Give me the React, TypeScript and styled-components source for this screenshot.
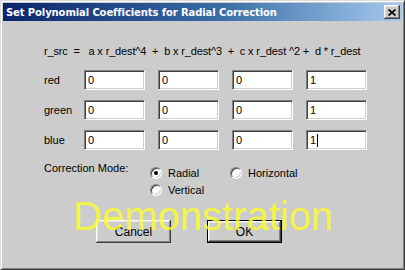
import React from "react";
import styled, { createGlobalStyle } from "styled-components";

const Global = createGlobalStyle`
  html, body {
    margin: 0;
    padding: 0;
    background: #cccccc;
  }
  * {
    box-sizing: border-box;
  }
`;

const face = "#cccccc";

const Window = styled.div`
  position: relative;
  width: 405px;
  height: 270px;
  background: ${face};
  border: 1px solid;
  border-color: #dcdcdc #404040 #404040 #dcdcdc;
  box-shadow: inset 1px 1px #ffffff, inset -1px -1px #808080;
  padding: 2px;
  font-family: "Liberation Sans", Arial, sans-serif;
  font-size: 11px;
  color: #000;
`;

const TitleBar = styled.div`
  height: 18px;
  display: flex;
  align-items: center;
  justify-content: space-between;
  padding: 0 2px 0 3px;
  background: linear-gradient(to right, #0a246a 0%, #3a6ea5 55%, #a6caf0 100%);
`;

const Title = styled.span`
  color: #ffffff;
  font-family: "DejaVu Sans", "Liberation Sans", sans-serif;
  font-weight: bold;
  font-size: 10px;
  letter-spacing: -0.1px;
  white-space: nowrap;
`;

const CloseButton = styled.button`
  width: 16px;
  height: 14px;
  padding: 0;
  border: none;
  background: ${face};
  display: flex;
  align-items: center;
  justify-content: center;
  box-shadow: inset -1px -1px #404040, inset 1px 1px #ffffff,
    inset -2px -2px #808080, inset 2px 2px #e0e0e0;
`;

const Body = styled.div`
  padding: 24px 0 0 41px;
`;

const Formula = styled.div`
  line-height: 13px;
  height: 13px;
  white-space: pre;
  letter-spacing: -0.15px;
  margin-bottom: 12px;
`;

const Grid = styled.div`
  display: grid;
  grid-template-columns: 27px repeat(4, 61px);
  column-gap: 13px;
  row-gap: 10px;
  align-items: center;
`;

const RowLabel = styled.span`
  white-space: nowrap;
  line-height: 20px;
`;

const Field = styled.div`
  height: 20px;
  background: #ffffff;
  display: flex;
  align-items: center;
  padding-left: 3px;
  border: 1px solid;
  border-color: #808080 #ffffff #ffffff #808080;
  box-shadow: inset 1px 1px #404040, inset -1px -1px #d4d0c8;
  line-height: 13px;
`;

const Caret = styled.span`
  display: inline-block;
  width: 1px;
  height: 13px;
  background: #000;
  margin-left: 1px;
`;

const ModeSection = styled.div`
  display: flex;
  margin-top: 12px;
`;

const ModeLabel = styled.span`
  width: 106px;
  line-height: 13px;
`;

const RadioGrid = styled.div`
  display: grid;
  grid-template-columns: 80px 80px;
  grid-auto-rows: 17px;
  margin-top: 2px;
`;

const Radio = styled.label`
  display: flex;
  align-items: center;
  gap: 6px;
  white-space: nowrap;
`;

const Circle = styled.span<{ $checked?: boolean }>`
  position: relative;
  width: 12px;
  height: 12px;
  border-radius: 50%;
  background: #ffffff;
  border: 1px solid;
  border-color: #808080 #ffffff #ffffff #808080;
  box-shadow: inset 1px 1px #404040, inset -1px -1px #d4d0c8;

  &::after {
    content: "";
    display: ${(p) => (p.$checked ? "block" : "none")};
    position: absolute;
    left: 3px;
    top: 3px;
    width: 4px;
    height: 4px;
    border-radius: 50%;
    background: #000;
  }
`;

const ButtonRow = styled.div`
  display: flex;
  gap: 36px;
  margin: 22px 0 0 52px;
`;

const Button = styled.button<{ $default?: boolean }>`
  width: 75px;
  height: 23px;
  padding: 0;
  font-family: "Liberation Sans", Arial, sans-serif;
  font-size: 12px;
  color: #000;
  background: ${face};
  border: ${(p) => (p.$default ? "1px solid #000" : "none")};
  box-shadow: inset -1px -1px #404040, inset 1px 1px #ffffff,
    inset -2px -2px #808080, inset 2px 2px #e0e0e0;
`;

const Watermark = styled.div`
  position: absolute;
  left: 72px;
  top: 195px;
  font-family: "Liberation Sans", Arial, sans-serif;
  font-size: 40px;
  line-height: 40px;
  color: rgba(255, 255, 40, 0.78);
  pointer-events: none;
  white-space: nowrap;
`;

const rows: { name: string; values: string[] }[] = [
  { name: "red", values: ["0", "0", "0", "1"] },
  { name: "green", values: ["0", "0", "0", "1"] },
  { name: "blue", values: ["0", "0", "0", "1"] },
];

export default function App() {
  return (
    <>
      <Global />
      <Window>
        <TitleBar>
          <Title>Set Polynomial Coefficients for Radial Correction</Title>
          <CloseButton>
            <svg width="8" height="7" viewBox="0 0 8 7">
              <path d="M0.5 0.5 L7.5 6.5 M7.5 0.5 L0.5 6.5" stroke="#000" strokeWidth="1.6" />
            </svg>
          </CloseButton>
        </TitleBar>
        <Body>
          <Formula>
            {"r_src  =   a x r_dest^4  +  b x r_dest^3  +  c x r_dest ^2 +  d * r_dest"}
          </Formula>
          <Grid>
            {rows.map((r, ri) => (
              <React.Fragment key={r.name}>
                <RowLabel>{r.name}</RowLabel>
                {r.values.map((v, i) => (
                  <Field key={i}>
                    {v}
                    {ri === 2 && i === 3 && <Caret />}
                  </Field>
                ))}
              </React.Fragment>
            ))}
          </Grid>
          <ModeSection>
            <ModeLabel>Correction Mode:</ModeLabel>
            <RadioGrid>
              <Radio>
                <Circle $checked />
                Radial
              </Radio>
              <Radio>
                <Circle />
                Horizontal
              </Radio>
              <Radio>
                <Circle />
                Vertical
              </Radio>
            </RadioGrid>
          </ModeSection>
          <ButtonRow>
            <Button>Cancel</Button>
            <Button $default>OK</Button>
          </ButtonRow>
        </Body>
        <Watermark>Demonstration</Watermark>
      </Window>
    </>
  );
}
